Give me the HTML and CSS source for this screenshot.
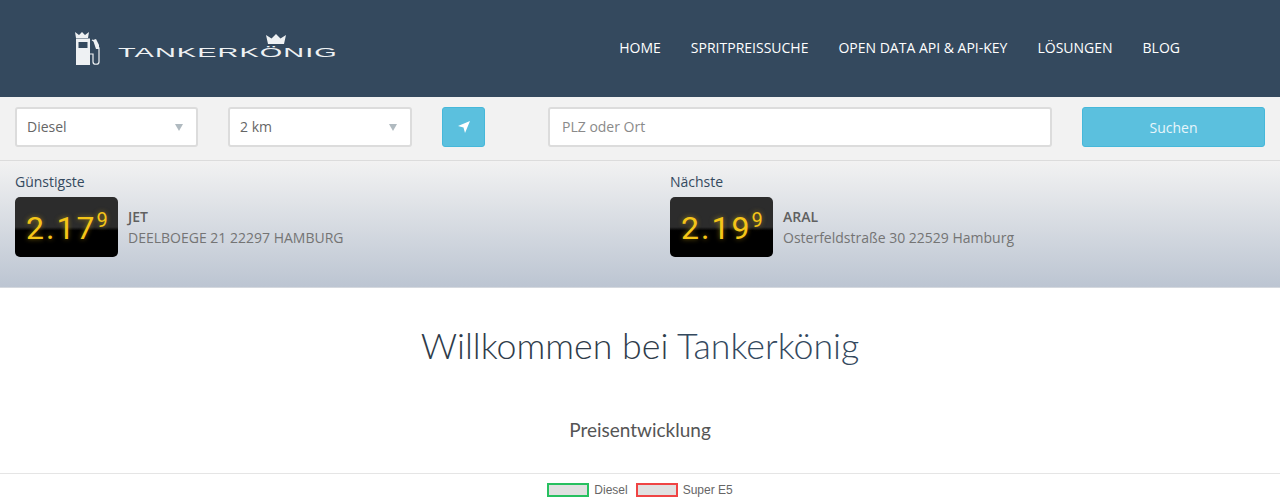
FILE: index.html
```html
<!DOCTYPE html>
<html lang="de">
<head>
    <meta charset="UTF-8">
    <meta name="viewport" content="width=device-width, initial-scale=1.0">
    <title>Tankerkönig</title>
    <link rel="stylesheet" href="styles.css">
</head>
<body>
    <header class="site-header">
        <a class="logo" href="#">
            <svg class="logo-pump" width="28" height="34" viewBox="0 0 28 34">
                <path d="M1 6 L0 0 L4 3 L7 0 L10 3 L14 0 L13 6 Z" fill="#eef1f3"/>
                <path fill-rule="evenodd" d="M1 6.500 H15 V33 H1 Z M3.500 10 V16 H12.500 V10 Z" fill="#eef1f3"/>
                <path d="M15 22 H18 V30 C18 33 24 33 24 30 V16 L19 9 L17 8" fill="none" stroke="#eef1f3" stroke-width="1.200"/>
                <path d="M18 8 L21 7 L24 13 V17 H21 Z" fill="#eef1f3"/>
            </svg>
            <span class="logo-text">TANKERKÖNIG</span>
            <svg class="logo-crown" width="20" height="11" viewBox="0 0 20 11">
                <path d="M2 10 L0 1 L5.500 4.500 L10 0 L14.500 4.500 L20 1 L18 10 Z" fill="#eef1f3"/>
            </svg>
        </a>
        <nav class="main-nav">
            <a href="#">Home</a>
            <a href="#">Spritpreissuche</a>
            <a href="#">Open Data API &amp; API-Key</a>
            <a href="#">Lösungen</a>
            <a href="#">Blog</a>
        </nav>
    </header>

    <form class="search-bar">
        <div class="select-wrap">
            <select>
                <option>Diesel</option>
            </select>
        </div>
        <div class="select-wrap">
            <select>
                <option>2 km</option>
            </select>
        </div>
        <button class="btn locate-btn" type="button" aria-label="Standort">
            <svg width="12" height="12" viewBox="0 0 12 12">
                <path d="M12 0 L7 12 L5.500 6.500 L0 5 Z" fill="#fff"/>
            </svg>
        </button>
        <input class="place-input" type="text" placeholder="PLZ oder Ort">
        <button class="btn" type="button">Suchen</button>
    </form>

    <section class="stations">
        <div class="station">
            <h4>Günstigste</h4>
            <div class="station-row">
                <div class="price-display"><span class="price">2.17</span><sup>9</sup></div>
                <div class="station-info">
                    <strong>JET</strong>
                    <span>DEELBOEGE 21 22297 HAMBURG</span>
                </div>
            </div>
        </div>
        <div class="station">
            <h4>Nächste</h4>
            <div class="station-row">
                <div class="price-display"><span class="price">2.19</span><sup>9</sup></div>
                <div class="station-info">
                    <strong>ARAL</strong>
                    <span>Osterfeldstraße 30 22529 Hamburg</span>
                </div>
            </div>
        </div>
    </section>

    <main class="content">
        <h1>Willkommen bei <span class="accent">Tankerkönig</span></h1>
        <h2>Preisentwicklung</h2>
        <div class="chart-legend">
            <span class="swatch swatch-green"></span>
            <span class="legend-label">Diesel</span>
            <span class="swatch swatch-red"></span>
            <span class="legend-label">Super E5</span>
        </div>
    </main>
</body>
</html>
```

FILE: styles.css
```css
* {
    box-sizing: border-box;
}
html, body {
    height: 500px;
    overflow: hidden;
}
body {
    margin: 0;
    font-family: "Open Sans", Arial, sans-serif;
    font-size: 14px;
    color: #34495e;
    background: #fff;
}

/* header */
.site-header {
    display: flex;
    justify-content: space-between;
    align-items: center;
    height: 97px;
    padding: 0 100px 0 75px;
    background-color: #34495e;
}
.logo {
    display: flex;
    align-items: flex-end;
    position: relative;
    color: #eef1f3;
    text-decoration: none;
}
.logo-pump {
    display: block;
}
.logo-text {
    width: 102px;
    margin: 0 0 6px 15px;
    font-family: "Liberation Sans", Arial, sans-serif;
    font-size: 13.500px;
    line-height: 14px;
    letter-spacing: 0.500px;
    white-space: nowrap;
    transform: scaleX(2.140);
    transform-origin: left center;
}
.logo-crown {
    position: absolute;
    left: 191px;
    top: 2px;
}
.main-nav {
    display: flex;
    gap: 30px;
    margin-top: -2px;
}
.main-nav a {
    color: #fff;
    text-decoration: none;
    text-transform: uppercase;
}

/* search */
.search-bar {
    display: grid;
    grid-template-columns: 183px 184px 43px 537px 183px;
    gap: 30px;
    align-items: start;
    height: 64px;
    padding: 10px 15px 0;
    background-color: #f2f2f2;
    border-bottom: 1px solid #dcdcdc;
}
.select-wrap {
    position: relative;
}
.select-wrap::after {
    content: "";
    position: absolute;
    right: 15px;
    top: 17px;
    border-top: 7px solid #b0bac0;
    border-left: 4px solid transparent;
    border-right: 4px solid transparent;
}
select, .place-input {
    display: block;
    width: 100%;
    height: 40px;
    padding: 0 10px 1px;
    font-family: inherit;
    font-size: 14px;
    color: #666;
    background: #fff;
    border: 2px solid #dcdcdc;
    border-radius: 3px;
    appearance: none;
}
.place-input {
    margin-left: 33px;
    width: 504px;
    padding-left: 12px;
}
.place-input::placeholder {
    color: #8a8a8a;
    opacity: 1;
}
.btn {
    height: 40px;
    padding: 0;
    font-family: inherit;
    font-size: 14px;
    color: #e8f6fb;
    background-color: #5bc0de;
    border: 1px solid #46b8da;
    border-radius: 3px;
}
.locate-btn {
    display: flex;
    justify-content: center;
    align-items: center;
}

/* price boxes */
.stations {
    display: grid;
    grid-template-columns: 655px 1fr;
    height: 127px;
    padding: 11px 15px 0;
    background: linear-gradient(#f2f2f2, #bcc5d2);
    border-bottom: 1px solid #d4d8de;
}
.station h4 {
    margin: 0 0 6px;
    font-size: 14px;
    font-weight: 400;
    line-height: 19px;
}
.station-row {
    display: flex;
    align-items: center;
    gap: 10px;
}
.price-display {
    display: flex;
    align-items: flex-start;
    width: 103px;
    height: 60px;
    padding: 11px 0 0 11px;
    color: #f5c518;
    font-family: Roboto, sans-serif;
    font-weight: 400;
    background: linear-gradient(#2c2c2c 50%, #000 56%);
    border-radius: 5px;
}
.price {
    font-size: 32px;
    line-height: 40px;
    letter-spacing: 2px;
    text-shadow: 0 0 5px rgba(245, 197, 24, 0.500);
}
.price-display sup {
    margin-top: 0;
    font-size: 20px;
    line-height: 24px;
    text-shadow: 0 0 5px rgba(245, 197, 24, 0.500);
}
.station-info {
    display: flex;
    flex-direction: column;
    gap: 2px;
    line-height: 19px;
    color: #747474;
}
.station-info strong {
    font-weight: 600;
    color: #606060;
}

/* main part */
.content {
    padding-top: 33px;
    text-align: center;
}
.content h1 {
    margin: 0;
    font-family: Lato, sans-serif;
    font-size: 35.750px;
    font-weight: 300;
    line-height: 50px;
    color: #2f3c4a;
}
.accent {
    color: #34495e;
}
.content h2 {
    margin: 46px 0 0;
    font-family: Lato, sans-serif;
    font-size: 19px;
    font-weight: 400;
    line-height: 26px;
    color: #555;
}
.chart-legend {
    display: flex;
    justify-content: center;
    align-items: flex-start;
    height: 33px;
    padding-top: 9px;
    margin-top: 30px;
    border-top: 1px solid #e5e5e5;
    font-family: "Liberation Sans", Arial, sans-serif;
    font-size: 12px;
    color: #666;
}
.swatch {
    width: 42px;
    height: 14px;
    margin-right: 5px;
    background-color: #e0e0e0;
    border: 2px solid;
}
.swatch-green {
    border-color: #27c060;
}
.swatch-red {
    border-color: #ef4444;
}
.legend-label {
    margin-right: 8px;
}
.legend-label:last-child {
    margin-right: 0;
}
```
